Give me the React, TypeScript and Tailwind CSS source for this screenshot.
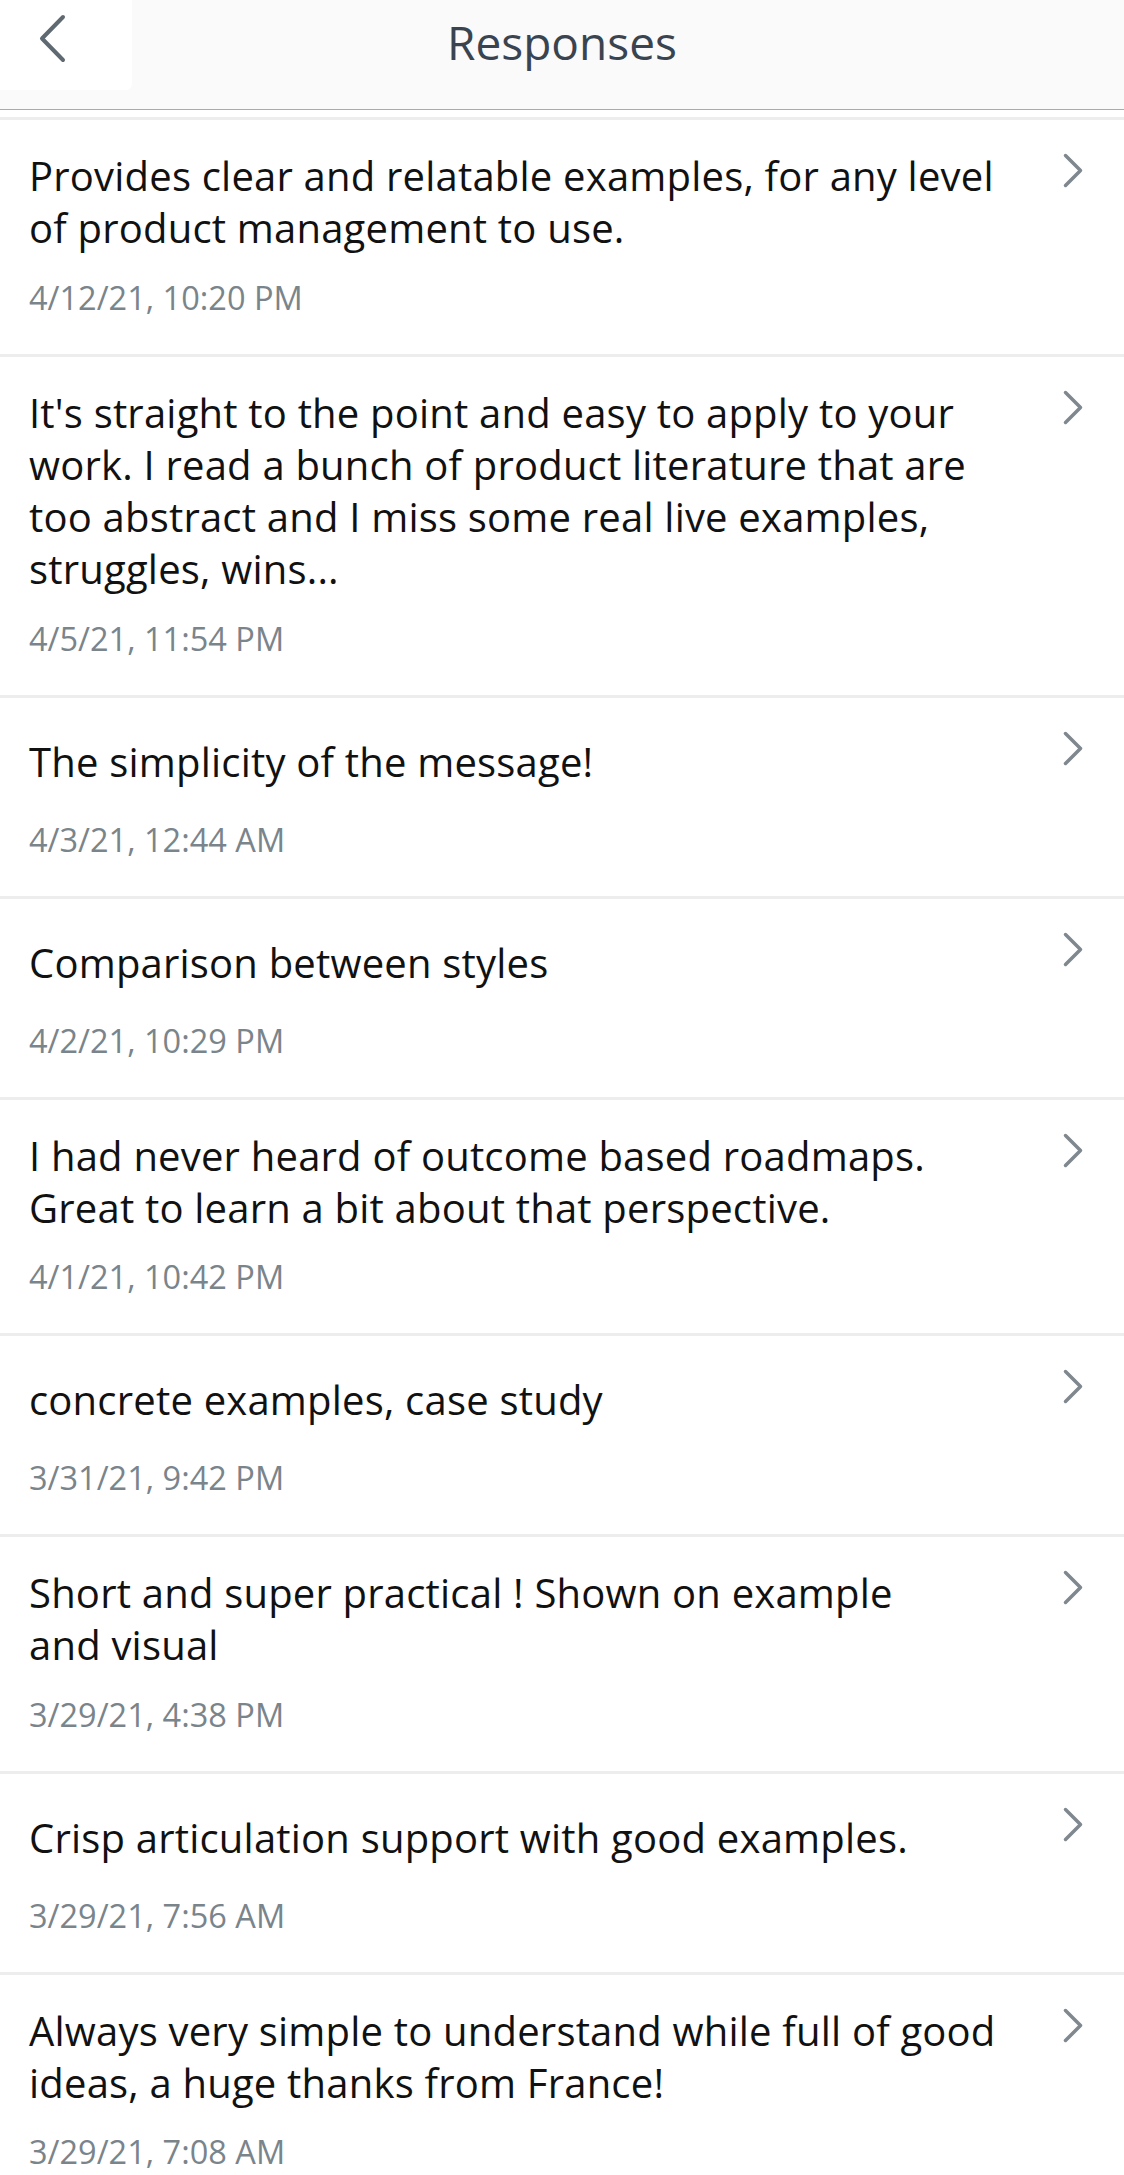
import React from "react";

interface Resposta {
  linhas: string[];
  data: string;
}

const respostas: Resposta[] = [
  {
    linhas: ["Provides clear and relatable examples, for any level", "of product management to use."],
    data: "4/12/21, 10:20 PM",
  },
  {
    linhas: [
      "It's straight to the point and easy to apply to your",
      "work. I read a bunch of product literature that are",
      "too abstract and I miss some real live examples,",
      "struggles, wins...",
    ],
    data: "4/5/21, 11:54 PM",
  },
  { linhas: ["The simplicity of the message!"], data: "4/3/21, 12:44 AM" },
  { linhas: ["Comparison between styles"], data: "4/2/21, 10:29 PM" },
  {
    linhas: ["I had never heard of outcome based roadmaps.", "Great to learn a bit about that perspective."],
    data: "4/1/21, 10:42 PM",
  },
  { linhas: ["concrete examples, case study"], data: "3/31/21, 9:42 PM" },
  {
    linhas: ["Short and super practical ! Shown on example", "and visual"],
    data: "3/29/21, 4:38 PM",
  },
  { linhas: ["Crisp articulation support with good examples."], data: "3/29/21, 7:56 AM" },
  {
    linhas: ["Always very simple to understand while full of good", "ideas, a huge thanks from France!"],
    data: "3/29/21, 7:08 AM",
  },
];

function Chevron() {
  return (
    <svg width="20" height="35" viewBox="0 0 20 35" fill="none" className="block">
      <path d="M2.5 2.5 L17.5 17.5 L2.5 32.5" stroke="#7f888f" strokeWidth="3.5" strokeLinecap="round" strokeLinejoin="round" />
    </svg>
  );
}

function ItemResposta({ resposta }: { resposta: Resposta }) {
  return (
    <div className="flex border-t-[3px] border-[#ededed] bg-white">
      <div className="flex-1 pl-[29px] pt-[30px] pb-[34px]">
        <div className="flex min-h-[69px] flex-col justify-center text-[40px] leading-[52.25px] tracking-[0.2px] text-[#111111]">
          {resposta.linhas.map((linha, i) => (
            <div key={i} className="whitespace-nowrap">
              {linha}
            </div>
          ))}
        </div>
        <div className="mt-[21px] text-[32.5px] leading-[44px] text-[#7a848b]">{resposta.data}</div>
      </div>
      <div className="w-[61px] shrink-0 pt-[33px]">
        <Chevron />
      </div>
    </div>
  );
}

export default function App() {
  return (
    <main className="min-h-screen bg-white font-['Open_Sans',sans-serif]">
      {/* cabeçalho */}
      <header className="grid h-[110px] grid-cols-[132px_1fr_132px] border-b border-[#aaaaaa] bg-[#fafafa]">
        <div className="h-[90px] rounded-br-md bg-white pl-[38px] pt-[14px]">
          <svg width="28" height="49" viewBox="0 0 28 49" fill="none" className="block">
            <path d="M25 3 L4 24.5 L25 46" stroke="#5e6971" strokeWidth="4" strokeLinecap="round" strokeLinejoin="round" />
          </svg>
        </div>
        <h1 className="pt-[11px] text-center text-[46px] leading-[62px] text-[#3a4450]">Responses</h1>
        <div />
      </header>

      <section className="mt-[7px]">
        {respostas.map((r, i) => (
          <ItemResposta key={i} resposta={r} />
        ))}
      </section>
    </main>
  );
}
